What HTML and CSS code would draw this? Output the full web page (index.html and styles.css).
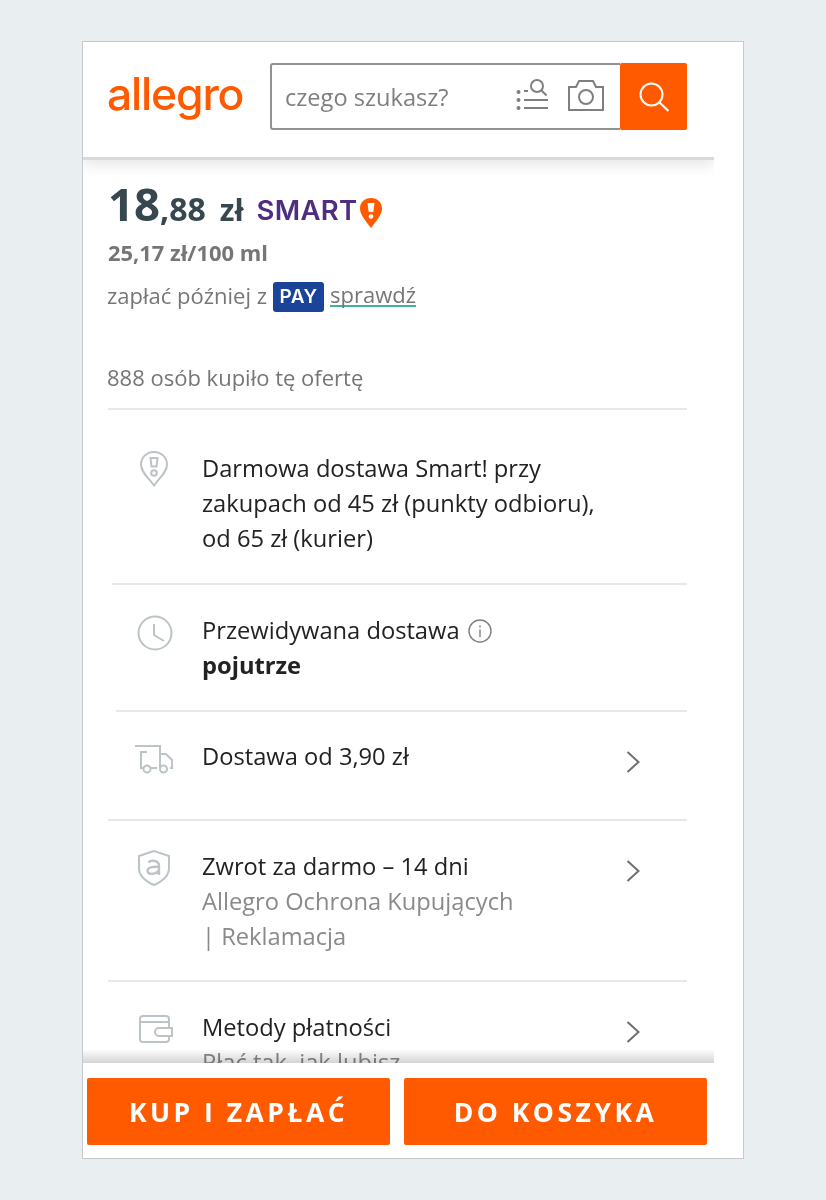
FILE: index.html
```html
<!DOCTYPE html>
<html lang="pl">
<head>
<meta charset="utf-8">
<title>Allegro</title>
<link rel="stylesheet" href="styles.css">
</head>
<body>
<div class="phone">
  <header class="header">
    <div class="logo">allegro</div>
    <div class="search">
      <div class="search-field">
        <span class="placeholder">czego szukasz?</span>
        <svg class="ico-list" width="34" height="34" viewBox="0 0 34 34" fill="none" stroke="#7f7f7f" stroke-width="2">
          <circle cx="3.500" cy="14" r="2" fill="#7f7f7f" stroke="none"/>
          <circle cx="3.500" cy="22" r="2" fill="#7f7f7f" stroke="none"/>
          <circle cx="3.500" cy="30" r="2" fill="#7f7f7f" stroke="none"/>
          <path d="M9 13h4M9 22h24M9 30h24"/>
          <circle cx="22" cy="8" r="6"/>
          <path d="M26.500 12.500l5 5"/>
        </svg>
        <svg class="ico-cam" width="36" height="32" viewBox="0 0 36 32" fill="none" stroke="#7f7f7f" stroke-width="2">
          <path d="M1 8h7l3-6h14l3 6h7v23H1z"/>
          <circle cx="18" cy="18" r="7"/>
        </svg>
      </div>
      <button class="search-btn" aria-label="Szukaj">
        <svg width="34" height="34" viewBox="0 0 34 34" fill="none" stroke="#fff" stroke-width="2">
          <circle cx="14.500" cy="14.500" r="11"/>
          <path d="M22.500 22.500l9 8.500"/>
        </svg>
      </button>
    </div>
  </header>

  <main class="content">
    <div class="price-line">
      <span class="price"><span class="p-big">18</span><span class="p-mid">,88</span><span class="p-cur">zł</span></span>
      <span class="smart">SMART</span>
      <svg class="smart-pin" width="24" height="32" viewBox="0 0 24 32">
        <path d="M12 1C5.500 1 1 5.500 1 11.500 1 18 7 24 12 31c5-7 11-13 11-19.500C23 5.500 18.500 1 12 1z" fill="#ff5a00"/>
        <path d="M8.500 6h7l-1.200 9h-4.600z" fill="#fff"/>
        <circle cx="12" cy="19.500" r="2.300" fill="#fff"/>
      </svg>
    </div>
    <div class="unit-price">25,17 zł/100 ml</div>
    <div class="pay-line">
      <span>zapłać później z</span>
      <span class="pay-badge">PAY</span>
      <span class="pay-link">sprawdź</span>
    </div>
    <div class="bought">888 osób kupiło tę ofertę</div>

    <section class="row row-first">
      <svg class="icon" width="30" height="38" viewBox="0 0 30 38" fill="none" stroke="#bcc4c8" stroke-width="2">
        <path d="M15 2C7.500 2 2 7.500 2 14.500 2 22 9.500 28 15 35.500 20.500 28 28 22 28 14.500 28 7.500 22.500 2 15 2z"/>
        <path d="M11.500 8h7l-1 8.500h-5z"/>
        <circle cx="15" cy="23" r="2.800"/>
      </svg>
      <div class="text">Darmowa dostawa Smart! przy<br>zakupach od 45 zł (punkty odbioru),<br>od 65 zł (kurier)</div>
    </section>

    <section class="row row-inset-a">
      <svg class="icon icon-clock" width="36" height="36" viewBox="0 0 36 36" fill="none" stroke="#bcc4c8" stroke-width="2">
        <circle cx="18" cy="18" r="16.500"/>
        <path d="M17 9v11l10 6"/>
      </svg>
      <div class="text">
        <div class="info-line">Przewidywana dostawa
          <svg width="24" height="24" viewBox="0 0 24 24" fill="none" stroke="#7f7f7f" stroke-width="1.400">
            <circle cx="12" cy="12" r="11"/>
            <path d="M12 10.500v7.500M12 6.500v2"/>
          </svg>
        </div>
        <strong>pojutrze</strong>
      </div>
    </section>

    <section class="row row-inset-b row-link">
      <svg class="icon icon-truck" width="40" height="32" viewBox="0 0 40 32" fill="none" stroke="#bcc4c8" stroke-width="2">
        <path d="M1 2h25v22M6 8h7M7 8v16h2.500M17 24h6M26 10h6l6 6v8h-2"/>
        <circle cx="13" cy="25" r="3.500"/>
        <circle cx="29.500" cy="25" r="3.500"/>
      </svg>
      <div class="text">Dostawa od 3,90 zł</div>
      <svg class="chev" width="14" height="24" viewBox="0 0 14 24" fill="none" stroke="#6f6f6f" stroke-width="2"><path d="M1.500 2l11 10-11 10"/></svg>
    </section>

    <section class="row row-link row-return">
      <svg class="icon icon-shield" width="34" height="38" viewBox="0 0 34 38" fill="none" stroke="#bcc4c8" stroke-width="2">
        <path d="M17 2L2 7v12c0 8 7 13.500 15 17 8-3.500 15-9 15-17V7z"/>
        <path d="M11.500 13.500c2-2.500 10-2.500 10.500 2.500v10M22 18c-4-.5-11.500-.5-11.500 3.800 0 4.200 8 4 11.500-.3" stroke-width="2.400"/>
      </svg>
      <div class="text">Zwrot za darmo – 14 dni<div class="muted">Allegro Ochrona Kupujących<br>| Reklamacja</div></div>
      <svg class="chev" width="14" height="24" viewBox="0 0 14 24" fill="none" stroke="#6f6f6f" stroke-width="2"><path d="M1.500 2l11 10-11 10"/></svg>
    </section>

    <section class="row row-link row-last">
      <svg class="icon icon-wallet" width="34" height="28" viewBox="0 0 34 28" fill="none" stroke="#bcc4c8" stroke-width="2">
        <rect x="1" y="1" width="29" height="26" rx="3"/>
        <path d="M1 7h29"/>
        <path d="M33 13H20a3.500 3.500 0 0 0 0 8h13z" fill="#fff"/>
      </svg>
      <div class="text">Metody płatności<div class="muted">Płać tak, jak lubisz</div></div>
      <svg class="chev" width="14" height="24" viewBox="0 0 14 24" fill="none" stroke="#6f6f6f" stroke-width="2"><path d="M1.500 2l11 10-11 10"/></svg>
    </section>
    <div class="fade"></div>
  </main>

  <footer class="actions">
    <button class="cta">KUP I ZAPŁAĆ</button>
    <button class="cta">DO KOSZYKA</button>
  </footer>
</div>
</body>
</html>
```
FILE: styles.css
```css
* { box-sizing: border-box; }
html, body { margin: 0; padding: 0; }
body {
  background: #e9eef1;
  font-family: "Open Sans", "Noto Sans", sans-serif;
  height: 1200px;
  padding: 41px 82px;
  overflow: hidden;
}
.phone {
  width: 662px;
  height: 1118px;
  background: #fff;
  border: 1px solid #c6c9cb;
  display: flex;
  flex-direction: column;
  overflow: hidden;
}
.header {
  width: 631px;
  height: 118px;
  flex: none;
  display: flex;
  align-items: flex-start;
  padding: 21px 27px 0 24px;
  border-bottom: 3px solid #d9d9d9;
  box-shadow: 0 5px 14px rgba(0, 0, 0, .1);
  clip-path: inset(0 0 -30px 0);
  position: relative;
  z-index: 2;
  background: #fff;
}
.logo {
  width: 163px;
  flex: none;
  color: #ff5a00;
  font-family: "Inter", sans-serif;
  font-size: 44.500px;
  font-weight: 500;
  line-height: 62px;
  letter-spacing: -1.200px;
}
.search { display: flex; flex: 1; height: 67px; }
.search-field {
  flex: 1;
  display: flex;
  align-items: center;
  border: 2px solid #929292;
  border-right: 0;
  border-radius: 3px 0 0 3px;
  padding: 0 16px 0 13px;
}
.placeholder { flex: 1; color: #7f7f7f; font-size: 23.600px; white-space: nowrap; }
.ico-list { margin: -4px 19px 0 0; }
.ico-cam { margin-top: -3px; }
.search-btn {
  width: 67px;
  flex: none;
  background: #ff5a00;
  border: 0;
  border-radius: 2px;
  padding: 0;
  display: flex;
  align-items: center;
  justify-content: center;
}
.content {
  flex: 1;
  width: 631px;
  min-height: 0;
  padding: 0 27px 0 25px;
  overflow: hidden;
  position: relative;
}
.price-line {
  display: flex;
  align-items: center;
  height: 60px;
  margin-top: 19px;
  color: #37474f;
  font-weight: 700;
}
.price { line-height: 60px; white-space: nowrap; }
.p-big { font-size: 45.500px; }
.p-mid { font-size: 32px; }
.p-cur { font-size: 30px; margin-left: 14px; }
.smart {
  margin: 2px 0 0 13px;
  color: #4f2d7f;
  font-family: "Inter", sans-serif;
  font-size: 27.500px;
  font-weight: 600;
  letter-spacing: .3px;
}
.smart-pin { margin: 8px 0 0 2px; }
.unit-price {
  margin-top: -4px;
  color: #767676;
  font-size: 21.900px;
  font-weight: 700;
  line-height: 36px;
}
.pay-line {
  display: flex;
  align-items: center;
  margin: 6px 0 0 -1px;
  color: #767676;
  font-size: 22px;
  line-height: 36px;
}
.pay-badge {
  margin: 4px 6px 0;
  width: 51px;
  height: 30px;
  border-radius: 3px;
  background: #1a4497;
  color: #fff;
  font-family: "Inter", sans-serif;
  font-size: 19px;
  font-weight: 600;
  letter-spacing: .5px;
  line-height: 30px;
  text-align: center;
}
.pay-link { border-bottom: 2px solid #3eb39a; line-height: 22px; }
.bought {
  margin: 46px 0 0 -1px;
  padding-bottom: 13px;
  color: #767676;
  font-size: 22px;
  line-height: 36px;
}
.row {
  position: relative;
  display: flex;
  align-items: flex-start;
  padding: 28px 0 27px 94px;
  border-top: 2px solid #e8e8e8;
  color: #222;
  font-size: 23.700px;
  line-height: 35px;
}
.row-first { padding-top: 41px; padding-bottom: 27px; }
.row-inset-a { margin-left: 4px; padding-left: 90px; }
.row-inset-b { margin-left: 8px; padding: 27px 0 28px 86px; min-height: 109px; }
.row-return { padding-bottom: 26px; }
.row-last { padding-top: 28px; }
.text { flex: 1; }
.text strong { font-weight: 700; }
.info-line { display: flex; align-items: center; gap: 8px; white-space: nowrap; }
.muted { color: #8a8a8a; }
.icon { position: absolute; left: 31px; top: 40px; }
.icon-clock { left: 25px; top: 30px; }
.icon-truck { left: 18px; top: 32px; }
.icon-shield { left: 29px; top: 28px; }
.icon-wallet { left: 31px; top: 33px; }
.chev { position: absolute; right: 47px; top: 38px; }
.fade {
  position: absolute;
  left: 0;
  right: 0;
  bottom: 0;
  height: 14px;
  background: linear-gradient(to bottom, #fff, #d4d4d4);
  mix-blend-mode: multiply;
}
.actions {
  flex: none;
  height: 95px;
  display: flex;
  gap: 14px;
  padding: 15px 36px 13px 4px;
  background: #fff;
}
.cta {
  flex: 1;
  border: 0;
  border-radius: 2px;
  background: #ff5a00;
  color: #fff;
  font-family: "Open Sans", sans-serif;
  font-size: 26.500px;
  font-weight: 700;
  letter-spacing: 3.500px;
  padding: 0;
}
```
